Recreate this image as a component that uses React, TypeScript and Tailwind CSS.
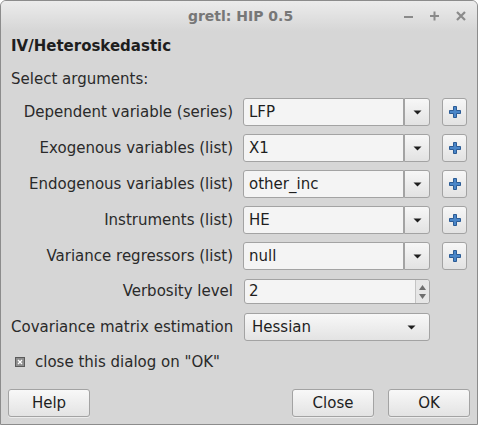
import React from "react";

const font = { fontFamily: '"DejaVu Sans", Verdana, sans-serif' };

function DropArrow() {
  return (
    <svg width="9" height="5" viewBox="0 0 9 5">
      <path d="M0.5 0.5 L8.5 0.5 L4.5 4.5 Z" fill="#1e1e1e" />
    </svg>
  );
}

function PlusIcon() {
  return (
    <svg width="12" height="12" viewBox="0 0 12 12">
      <path
        d="M4.5 0.5 H7.5 V4.5 H11.5 V7.5 H7.5 V11.5 H4.5 V7.5 H0.5 V4.5 H4.5 Z"
        fill="#4a86c8"
        stroke="#2b5b95"
        strokeWidth="1"
      />
    </svg>
  );
}

function ComboRow({ label, value }: { label: string; value: string }) {
  return (
    <div className="flex items-center h-[28px]">
      <div className="w-[222px] text-right text-[15px] text-[#2a2a2a] leading-none">{label}</div>
      <div className="ml-[10px] flex h-[28px]">
        <div className="w-[161px] h-[28px] bg-[#f4f4f4] border border-[#a3a3a3] rounded-l-[3px] flex items-center px-[5px] text-[15px] text-[#1e1e1e]">
          {value}
        </div>
        <div className="w-[26px] h-[28px] border border-[#a3a3a3] rounded-r-[3px] bg-gradient-to-b from-[#f7f7f7] to-[#e2e2e2] flex items-center justify-center">
          <DropArrow />
        </div>
      </div>
      <div className="ml-[12px] w-[25px] h-[28px] border border-[#a3a3a3] rounded-[3px] bg-gradient-to-b from-[#f7f7f7] to-[#e2e2e2] flex items-center justify-center">
        <PlusIcon />
      </div>
    </div>
  );
}

function Button({ children, w }: { children: React.ReactNode; w: string }) {
  return (
    <div
      className={`${w} h-[28px] border border-[#a3a3a3] rounded-[3px] bg-gradient-to-b from-[#f8f8f8] to-[#e3e3e3] flex items-center justify-center text-[15px] text-[#1e1e1e] shadow-[0_1px_0_rgba(255,255,255,0.5)]`}
    >
      {children}
    </div>
  );
}

export default function App() {
  return (
    <div style={font} className="w-[478px] h-[425px] bg-[#d6d6d6] border border-[#8c8c8c] rounded-t-[6px] flex flex-col overflow-hidden">
      <div className="h-[30px] shrink-0 flex items-center relative bg-gradient-to-b from-[#ececec] to-[#d6d6d6]">
        <div className="flex-1 text-center text-[14px] font-bold text-[#777777] pl-[3px]">gretl: HIP 0.5</div>
        <div className="absolute right-[10px] top-0 h-[30px] flex items-center gap-[14px] text-[#8a8a8a]">
          <svg width="12" height="12" viewBox="0 0 12 12">
            <rect x="1" y="6" width="9" height="2" fill="#8a8a8a" />
          </svg>
          <svg width="12" height="12" viewBox="0 0 12 12">
            <rect x="1" y="5" width="9" height="2" fill="#8a8a8a" />
            <rect x="4.5" y="1.5" width="2" height="9" fill="#8a8a8a" />
          </svg>
          <svg width="12" height="12" viewBox="0 0 12 12">
            <path d="M2 2 L10 10 M10 2 L2 10" stroke="#8a8a8a" strokeWidth="2.2" />
          </svg>
        </div>
      </div>
      <div className="pl-[10px] pr-[10px] flex flex-col">
        <div className="mt-[5px] h-[20px] flex items-center text-[15px] font-bold text-[#1e1e1e]">IV/Heteroskedastic</div>
        <div className="mt-[13px] h-[20px] flex items-center text-[15px] text-[#2a2a2a]">Select arguments:</div>
        <div className="mt-[9px] flex flex-col gap-[8px]">
          <ComboRow label="Dependent variable (series)" value="LFP" />
          <ComboRow label="Exogenous variables (list)" value="X1" />
          <ComboRow label="Endogenous variables (list)" value="other_inc" />
          <ComboRow label="Instruments (list)" value="HE" />
          <ComboRow label="Variance regressors (list)" value="null" />
        </div>
        <div className="mt-[9px] flex items-center h-[25px]">
          <div className="w-[222px] text-right text-[15px] text-[#2a2a2a]">Verbosity level</div>
          <div className="ml-[11px] flex h-[25px] w-[186px] bg-[#f4f4f4] border border-[#a3a3a3] rounded-[3px]">
            <div className="flex-1 flex items-center px-[4px] text-[15px] text-[#1e1e1e]">2</div>
            <div className="w-[14px] border-l border-[#c4c4c4] bg-[#e6e6e6] rounded-r-[3px] flex flex-col items-center justify-center gap-[4px]">
              <svg width="7" height="5" viewBox="0 0 7 5">
                <path d="M0 5 L3.5 0 L7 5 Z" fill="#6e6e6e" />
              </svg>
              <svg width="7" height="5" viewBox="0 0 7 5">
                <path d="M0 0 L7 0 L3.5 5 Z" fill="#6e6e6e" />
              </svg>
            </div>
          </div>
        </div>
        <div className="mt-[9px] flex items-center h-[28px]">
          <div className="w-[222px] text-right text-[15px] text-[#2a2a2a] whitespace-nowrap">Covariance matrix estimation</div>
          <div className="ml-[11px] w-[186px] h-[28px] border border-[#a3a3a3] rounded-[3px] bg-gradient-to-b from-[#f8f8f8] to-[#e3e3e3] flex items-center justify-between pl-[7px] pr-[13px] text-[15px] text-[#1e1e1e]">
            <span>Hessian</span>
            <DropArrow />
          </div>
        </div>
        <div className="mt-[13px] flex items-center h-[16px] pl-[4px]">
          <div className="w-[10px] h-[10px] border border-[#5a5a5a] bg-[#8e8e8e] flex items-center justify-center">
            <svg width="6" height="6" viewBox="0 0 6 6">
              <path d="M1 1 L5 5 M5 1 L1 5" stroke="#ffffff" strokeWidth="1.3" />
            </svg>
          </div>
          <span className="ml-[10px] text-[15px] text-[#2a2a2a]">close this dialog on "OK"</span>
        </div>
        <div className="mt-[19px] flex items-center">
          <div className="ml-[-3px]">
            <Button w="w-[82px]">Help</Button>
          </div>
          <div className="flex-1" />
          <Button w="w-[82px]">Close</Button>
          <div className="ml-[14px] mr-[-3px]">
            <Button w="w-[82px]">OK</Button>
          </div>
        </div>
      </div>
    </div>
  );
}
